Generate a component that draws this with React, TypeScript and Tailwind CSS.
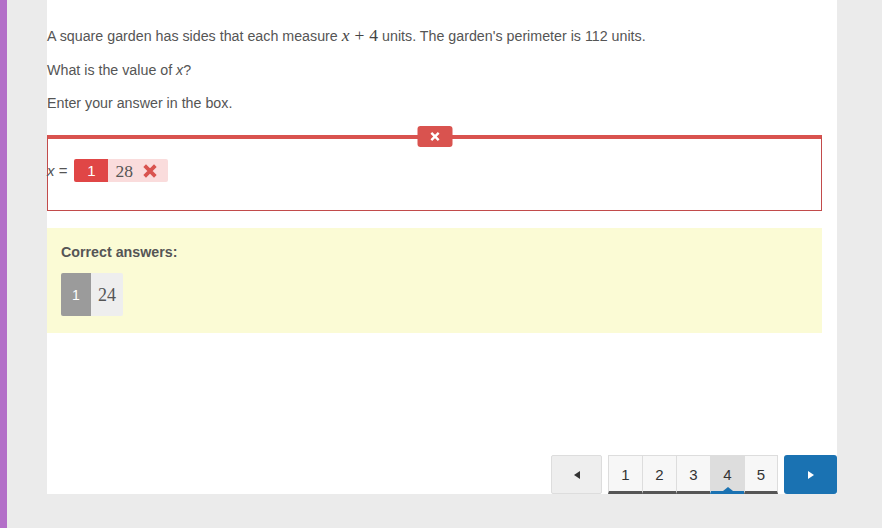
import React from "react";

const sans = { fontFamily: '"Liberation Sans", Arial, sans-serif' };
const serif = { fontFamily: '"Liberation Serif", "Times New Roman", serif' };

function XIcon({ className, stroke = 3 }: { className?: string; stroke?: number }) {
  return (
    <svg viewBox="0 0 12 12" className={className}>
      <path d="M2 2 L10 10 M10 2 L2 10" stroke="currentColor" strokeWidth={stroke} strokeLinecap="butt" fill="none" />
    </svg>
  );
}

export default function App() {
  const pages = [1, 2, 3, 4, 5];
  return (
    <div className="flex w-[882px] h-[528px] bg-[#ebebeb] text-[#555]" style={sans}>
      <div className="w-[7px] shrink-0 bg-[#b36fc8]" />
      <div className="ml-[40px] w-[790px] h-[494px] bg-white flex flex-col shrink-0">
        <div className="w-[775px] flex flex-col pt-[25px] text-[14.25px] leading-[20px]">
          <p>
            A square garden has sides that each measure{" "}
            <span className="text-[17.5px] text-[#444]" style={serif}>
              <i>x</i>
              <span className="mx-[5px]">+</span>4
            </span>{" "}
            units. The garden's perimeter is 112 units.
          </p>
          <p className="mt-[14px]">
            What is the value of <i>x</i>?
          </p>
          <p className="mt-[13px]">Enter your answer in the box.</p>

          <div className="relative mt-[22px] h-[76px] border border-[#c24b4b] border-t-4 border-t-[#d9534f] pt-[20px]">
            <div className="absolute left-1/2 -translate-x-1/2 top-[-13px] w-[35px] h-[21px] rounded-[3px] bg-[#d9534f] flex items-center justify-center text-white">
              <XIcon className="w-[11px] h-[11px]" stroke={2.6} />
            </div>
            <div className="flex items-center h-[23px] -ml-px">
              <span className="text-[15px] text-[#555]">
                <i>x</i> =
              </span>
              <div className="ml-[7px] flex h-[23px] rounded-[2px] overflow-hidden">
                <div className="w-[34px] bg-[#e04646] text-white flex items-center justify-center text-[15px]">1</div>
                <div className="w-[60px] bg-[#fadcdc] flex items-center pl-[7px]">
                  <span className="text-[17.5px] text-[#555]" style={serif}>28</span>
                  <XIcon className="ml-[9px] w-[16px] h-[16px] text-[#d9534f]" stroke={2.8} />
                </div>
              </div>
            </div>
          </div>

          <div className="mt-[17px] h-[105px] bg-[#fbfbd5] pl-[14px] pt-[14px]">
            <div className="font-bold text-[14.25px] leading-[20px] text-[#555]">Correct answers:</div>
            <div className="mt-[11px] flex h-[43px] rounded-[2px] overflow-hidden w-[62px]">
              <div className="w-[30px] bg-[#9b9b9b] text-white flex items-center justify-center text-[14px]">1</div>
              <div className="w-[32px] bg-[#eeeeee] flex items-center justify-center">
                <span className="text-[18px] text-[#555]" style={serif}>24</span>
              </div>
            </div>
          </div>
        </div>

        <div className="mt-auto flex justify-end items-end h-[39px]">
          <div className="w-[51px] h-[39px] bg-[#eeeeee] border border-[#dddddd] rounded-[2px] flex items-center justify-center">
            <span className="block w-0 h-0 border-y-[4px] border-y-transparent border-r-[6px] border-r-[#333]" />
          </div>
          <div className="ml-[6px] flex h-[39px] border-t border-[#dddddd] relative">
            {pages.map((p, i) => (
              <div
                key={p}
                className={
                  "relative w-[34px] h-full flex items-center justify-center pt-[3px] text-[15px] text-[#333] border-b-[3px] border-l border-l-[#dddddd] " +
                  (p === 4 ? "bg-[#dddddd] border-b-[#1a72b2]" : "bg-[#f7f7f7] border-b-[#555555]") +
                  (i === pages.length - 1 ? " border-r border-r-[#dddddd]" : "")
                }
              >
                {p}
                {p === 4 && (
                  <span className="absolute bottom-0 left-1/2 -translate-x-1/2 block w-0 h-0 border-x-[5px] border-x-transparent border-b-[4px] border-b-[#1a72b2]" />
                )}
              </div>
            ))}
          </div>
          <div className="ml-[6px] w-[53px] h-[39px] bg-[#1a72b2] rounded-[3px] flex items-center justify-center">
            <span className="block w-0 h-0 border-y-[4px] border-y-transparent border-l-[6px] border-l-white" />
          </div>
        </div>
      </div>
    </div>
  );
}
